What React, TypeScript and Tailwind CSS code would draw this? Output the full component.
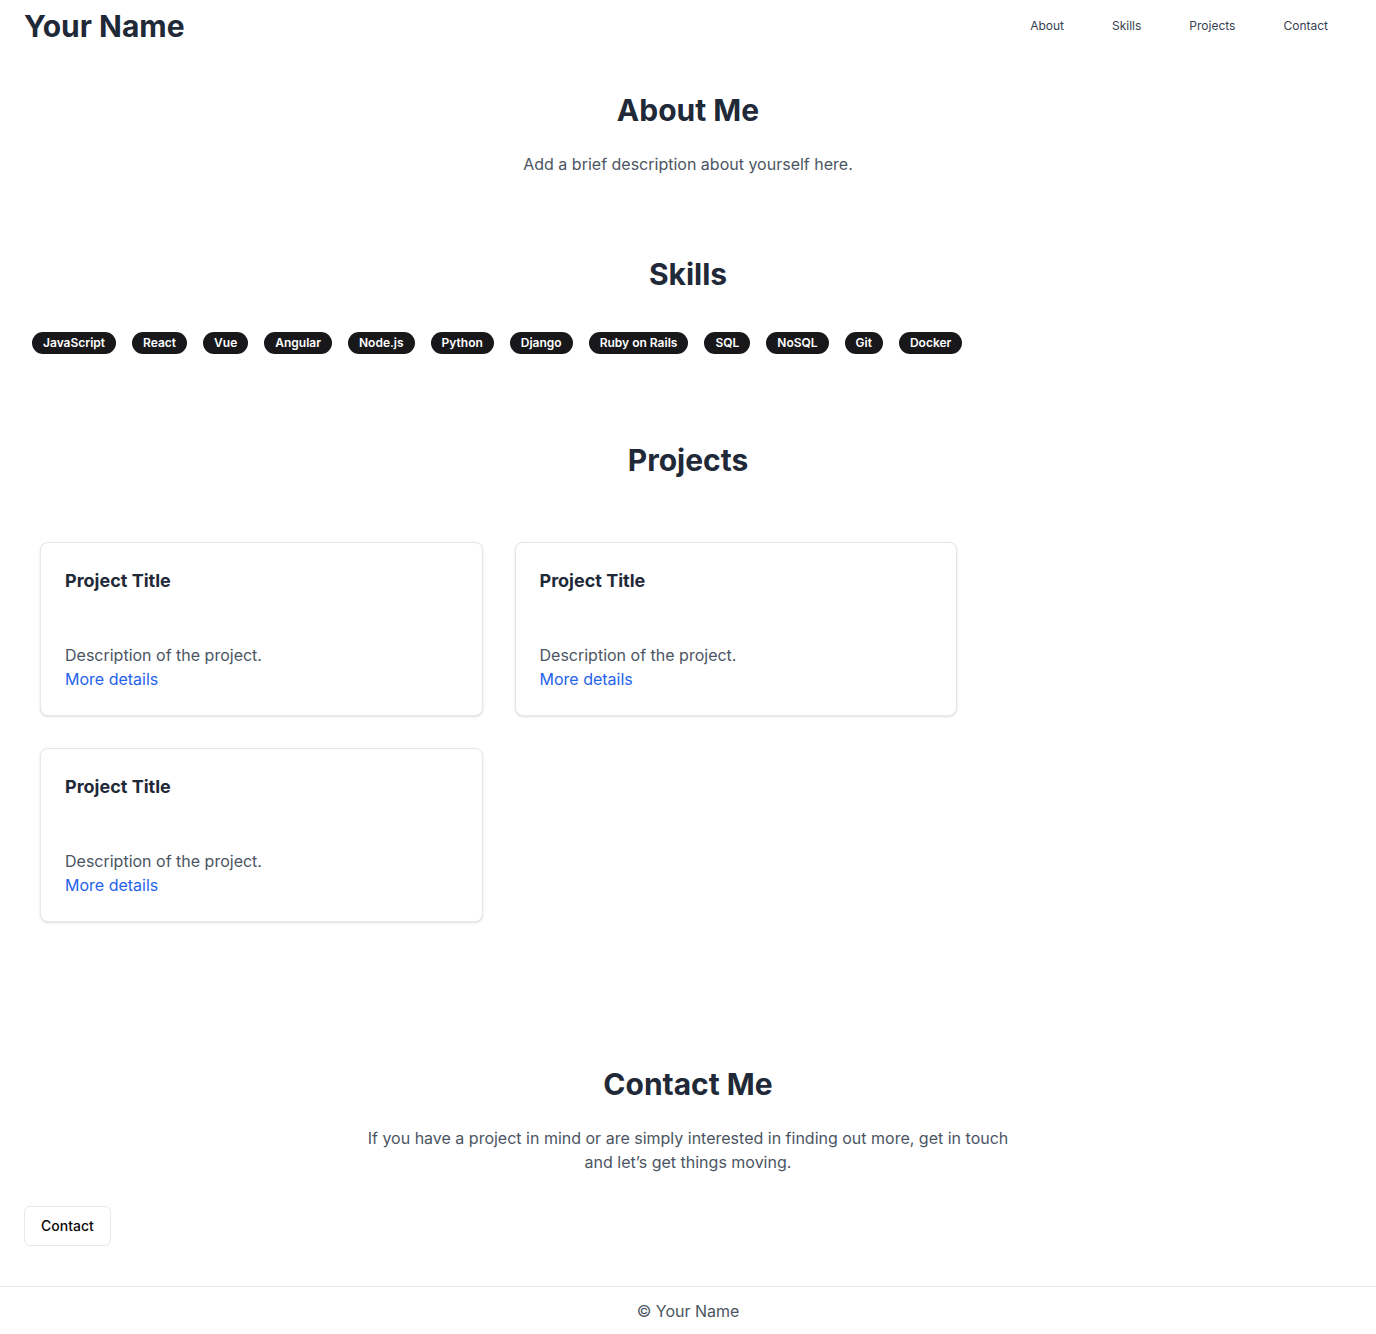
const SKILLS = [
  "JavaScript",
  "React",
  "Vue",
  "Angular",
  "Node.js",
  "Python",
  "Django",
  "Ruby on Rails",
  "SQL",
  "NoSQL",
  "Git",
  "Docker",
];

const NAV = ["About", "Skills", "Projects", "Contact"];

function ProjectCard() {
  return (
    <div className="rounded-lg border border-gray-200 bg-white p-6 shadow-sm">
      <h3 className="text-lg font-bold text-[#1f2937]">Project Title</h3>
      <p className="mt-12 text-base text-[#4b5563]">Description of the project.</p>
      <a href="#" className="text-base text-[#2563eb]">
        More details
      </a>
    </div>
  );
}

export default function App() {
  return (
    <div
      className="min-h-screen bg-white"
      style={{ fontFamily: "Inter, 'Noto Sans', sans-serif" }}
    >
      <header className="flex items-center justify-between px-6 py-2">
        <h1 className="text-3xl font-bold text-[#1f2937]">Your Name</h1>
        <nav className="flex items-center">
          {NAV.map((n) => (
            <a key={n} href="#" className="px-6 text-xs text-[#374151]">
              {n}
            </a>
          ))}
        </nav>
      </header>

      <main>
        <section className="px-6 py-10 text-center">
          <h2 className="text-3xl font-bold text-[#1f2937]">About Me</h2>
          <p className="mt-6 text-base text-[#4b5563]">
            Add a brief description about yourself here.
          </p>
        </section>

        <section className="px-6 py-10">
          <h2 className="text-center text-3xl font-bold text-[#1f2937]">Skills</h2>
          <div className="mt-8 flex flex-wrap">
            {SKILLS.map((s) => (
              <span
                key={s}
                className="m-2 inline-flex items-center rounded-full border border-transparent bg-[#18181b] px-2.5 py-0.5 text-xs font-semibold text-white"
              >
                {s}
              </span>
            ))}
          </div>
        </section>

        <section className="px-10 py-10">
          <h2 className="text-center text-3xl font-bold text-[#1f2937]">Projects</h2>
          <div className="grid w-[917px] grid-cols-2 gap-8 py-16">
            <ProjectCard />
            <ProjectCard />
            <ProjectCard />
          </div>
        </section>

        <section className="px-6 py-10">
          <h2 className="text-center text-3xl font-bold text-[#1f2937]">Contact Me</h2>
          <p className="mx-auto mt-6 max-w-[660px] text-center text-base text-[#4b5563]">
            If you have a project in mind or are simply interested in finding out more, get in
            touch and let’s get things moving.
          </p>
          <button className="mt-8 h-10 rounded-md border border-gray-200 bg-white px-4 text-sm font-medium text-[#09090b]">
            Contact
          </button>
        </section>
      </main>

      <footer className="border-t border-gray-200 py-3 text-center text-base text-[#4b5563]">
        © Your Name
      </footer>
    </div>
  );
}
